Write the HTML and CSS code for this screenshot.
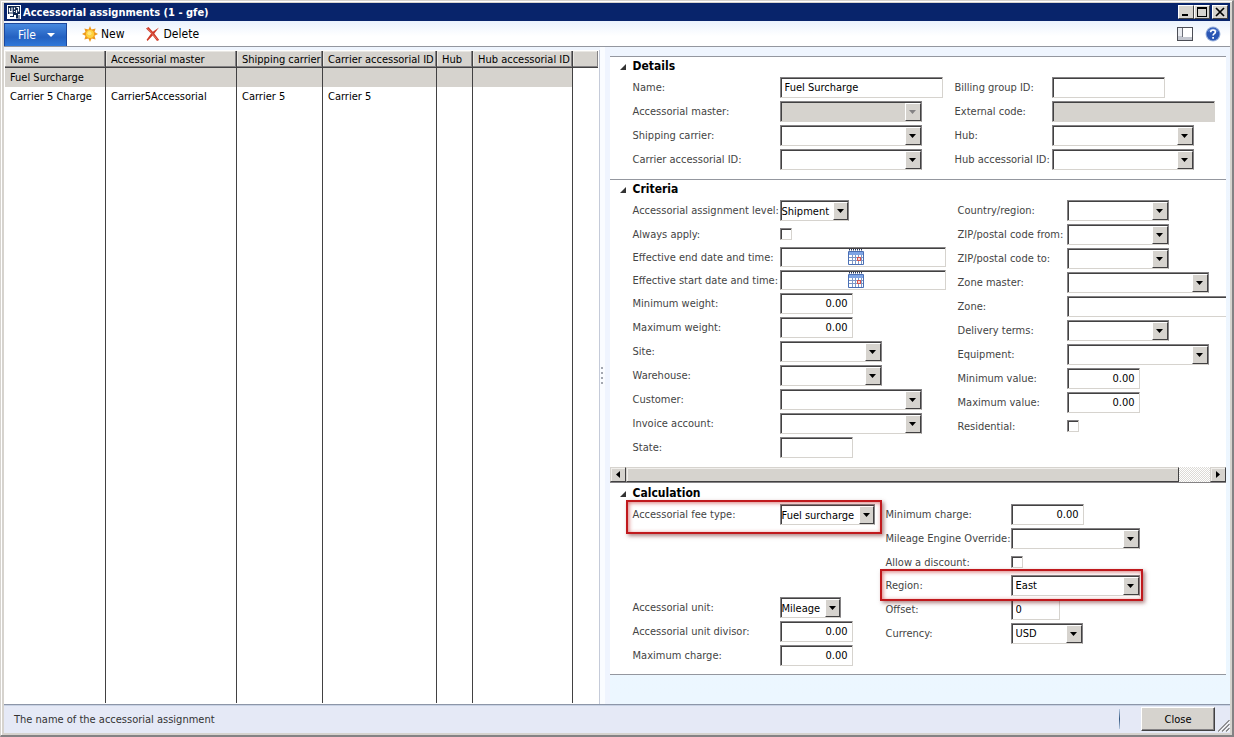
FILE: index.html
```html
<!DOCTYPE html>
<html lang="en">
<head>
<meta charset="utf-8">
<title>Accessorial assignments (1 - gfe)</title>
<link rel="stylesheet" href="styles.css">
</head>
<body>
<div class="window">
  <header class="titlebar">
    <svg class="app-icon" width="14" height="14" viewBox="0 0 14 14" aria-hidden="true">
      <rect width="14" height="14" fill="#fff"/>
      <path d="M1 1h12v8h-2v4H9v-3H7v2H3v-1h3V9H1z" fill="#10264c"/>
      <path d="M2.500 3v3.500h2.500V2.500M7.500 2.500v2M7.500 6v1M9.500 2.500h2v4M9.500 5v3M2 8h4" fill="none" stroke="#fff" stroke-width="1.200"/>
      <path d="M12 10v4M10 12v2" stroke="#10264c"/>
    </svg>
    <h1 class="title">Accessorial assignments (1 - gfe)</h1>
    <button class="win-btn" aria-label="Minimize"><svg width="12" height="10" viewBox="0 0 12 10"><path d="M2 7h6v2H2z"/></svg></button>
    <button class="win-btn" aria-label="Maximize"><svg width="12" height="10" viewBox="0 0 12 10"><path d="M1 0h10v10H1zM2 2v7h8V2z" fill-rule="evenodd"/></svg></button>
    <button class="win-btn win-close" aria-label="Close window"><svg width="12" height="10" viewBox="0 0 12 10"><path d="M2 1l8 8M10 1L2 9" stroke="#000" stroke-width="1.7"/></svg></button>
  </header>

  <nav class="toolbar">
    <button class="file-tab">File<svg width="8" height="4" viewBox="0 0 8 4"><path d="M0 0h8L4 4z" fill="#fff"/></svg></button>
    <button class="tool">
      <svg width="16" height="16" viewBox="0 0 16 16"><path d="M8 0l1.500 3.500L13.600 2.400 12.500 6 16 8l-3.500 1.800 1.100 3.800-4-1.100L8 16l-1.600-3.500-4 1.100 1.100-3.800L0 8l3.500-2-1.100-3.600 4.100 1.100z" fill="#ee9a1c"/><circle cx="8" cy="8" r="4" fill="#ffd23e"/><circle cx="7.500" cy="7.300" r="2" fill="#ffe680"/></svg>
      New
    </button>
    <button class="tool tool-delete">
      <svg width="14" height="14" viewBox="0 0 14 14"><path d="M0 1.500L2.500 0l4.300 4.800L13 .5 8.300 6.600l4.900 6.400-2.200 1-4.300-5.400L1.500 14 .6 12.800l4.500-6.200z" fill="#cf3a28"/><path d="M1.500 1.500l9.800 11" stroke="#e98070" stroke-width=".8"/></svg>
      Delete
    </button>
    <span class="spacer"></span>
    <button class="icon-btn" aria-label="Layout">
      <svg width="16" height="14" viewBox="0 0 16 14"><rect x=".5" y=".5" width="15" height="13" fill="#c3c6cf" stroke="#4b4d55"/><path d="M6 1h9v9H6z" fill="#fff"/><path d="M1 1h4v8H1z" fill="#e9ebf0"/><path d="M5.500 1v9" stroke="#6b6e78"/></svg>
    </button>
    <button class="icon-btn" aria-label="Help">
      <svg width="16" height="16" viewBox="0 0 16 16"><circle cx="8" cy="8" r="7.500" fill="#9db4dd"/><circle cx="8" cy="8" r="6.500" fill="#2a56b4"/><path d="M2.500 6a6 6 0 0 1 11 0q-5.500-2-11 0z" fill="#5d84d3"/><path d="M5.700 6.200C5.700 3.300 10.400 3.300 10.400 6c0 1.700-2.300 1.700-2.300 3.500M8.100 11v1.700" fill="none" stroke="#fff" stroke-width="1.700"/></svg>
    </button>
  </nav>

  <main class="content">
    <div class="list-pane">
      <table class="grid">
        <colgroup><col class="c-name"><col class="c-master"><col class="c-carrier"><col class="c-id"><col class="c-hub"><col class="c-hubid"><col></colgroup>
        <thead>
          <tr><th>Name</th><th>Accessorial master</th><th>Shipping carrier</th><th>Carrier accessorial ID</th><th>Hub</th><th>Hub accessorial ID</th><th></th></tr>
        </thead>
        <tbody>
          <tr class="selected"><td>Fuel Surcharge</td><td></td><td></td><td></td><td></td><td></td><td></td></tr>
          <tr><td>Carrier 5 Charge</td><td>Carrier5Accessorial</td><td>Carrier 5</td><td>Carrier 5</td><td></td><td></td><td></td></tr>
          <tr class="filler"><td></td><td></td><td></td><td></td><td></td><td></td><td></td></tr>
        </tbody>
      </table>
    </div>
    <div class="splitter"><i></i><i></i><i></i><i></i></div>

    <div class="form-pane">
      <form class="panel">
        <section class="section details">
          <h2><svg width="6" height="6" viewBox="0 0 6 6"><path d="M6 0v6H0z"/></svg>Details</h2>
          <div class="columns">
            <div class="fields">
              <div class="row"><label for="name">Name:</label><input class="w-long" id="name" type="text" value="Fuel Surcharge"></div>
              <div class="row"><label for="master">Accessorial master:</label><span class="combo w-combo disabled"><select id="master" disabled><option></option></select></span></div>
              <div class="row"><label for="carrier">Shipping carrier:</label><span class="combo w-combo"><select id="carrier"><option></option></select></span></div>
              <div class="row"><label for="cid">Carrier accessorial ID:</label><span class="combo w-combo"><select id="cid"><option></option></select></span></div>
            </div>
            <div class="fields">
              <div class="row"><label for="billing">Billing group ID:</label><input class="w-group" id="billing" type="text"></div>
              <div class="row"><label for="ext">External code:</label><input class="w-long" id="ext" type="text" disabled></div>
              <div class="row"><label for="hub">Hub:</label><span class="combo w-combo"><select id="hub"><option></option></select></span></div>
              <div class="row"><label for="hubid">Hub accessorial ID:</label><span class="combo w-combo"><select id="hubid"><option></option></select></span></div>
            </div>
          </div>
        </section>

        <section class="section criteria">
          <h2><svg width="6" height="6" viewBox="0 0 6 6"><path d="M6 0v6H0z"/></svg>Criteria</h2>
          <div class="columns">
            <div class="fields">
              <div class="row"><label for="level">Accessorial assignment level:</label><span class="combo list w-level"><select id="level"><option>Shipment</option></select></span></div>
              <div class="row short"><label for="always">Always apply:</label><input id="always" type="checkbox"></div>
              <div class="row short"><label for="end">Effective end date and time:</label><span class="date"><input id="end" type="text"><svg width="16" height="16" viewBox="0 0 16 16"><path d="M.5 2.500h15v13H.5z" fill="#fff" stroke="#4a6fb5"/><path d="M1 3h14v3H1z" fill="#7ea4e4"/><path d="M1 .8h14" stroke="#26365c" stroke-width="1.600" stroke-dasharray="1 1"/><path d="M1 8.500h14M1 11.500h14M4.500 6v9M7.500 6v9M10.500 6v9M13.500 6v9" stroke="#7d97c6"/><path d="M9 8h4v4H9z" fill="#d9544f"/><path d="M10 9h2v2h-2z" fill="#fbd9d6"/></svg></span></div>
              <div class="row short"><label for="start">Effective start date and time:</label><span class="date"><input id="start" type="text"><svg width="16" height="16" viewBox="0 0 16 16"><path d="M.5 2.500h15v13H.5z" fill="#fff" stroke="#4a6fb5"/><path d="M1 3h14v3H1z" fill="#7ea4e4"/><path d="M1 .8h14" stroke="#26365c" stroke-width="1.600" stroke-dasharray="1 1"/><path d="M1 8.500h14M1 11.500h14M4.500 6v9M7.500 6v9M10.500 6v9M13.500 6v9" stroke="#7d97c6"/><path d="M9 8h4v4H9z" fill="#d9544f"/><path d="M10 9h2v2h-2z" fill="#fbd9d6"/></svg></span></div>
              <div class="row"><label for="minw">Minimum weight:</label><input class="num" id="minw" type="text" value="0.00"></div>
              <div class="row"><label for="maxw">Maximum weight:</label><input class="num" id="maxw" type="text" value="0.00"></div>
              <div class="row"><label for="site">Site:</label><span class="combo w-code"><select id="site"><option></option></select></span></div>
              <div class="row"><label for="wh">Warehouse:</label><span class="combo w-code"><select id="wh"><option></option></select></span></div>
              <div class="row"><label for="cust">Customer:</label><span class="combo w-combo"><select id="cust"><option></option></select></span></div>
              <div class="row"><label for="inv">Invoice account:</label><span class="combo w-combo"><select id="inv"><option></option></select></span></div>
              <div class="row"><label for="state">State:</label><input class="num" id="state" type="text"></div>
            </div>
            <div class="fields">
              <div class="row"><label for="country">Country/region:</label><span class="combo w-code"><select id="country"><option></option></select></span></div>
              <div class="row"><label for="zipf">ZIP/postal code from:</label><span class="combo w-code"><select id="zipf"><option></option></select></span></div>
              <div class="row"><label for="zipt">ZIP/postal code to:</label><span class="combo w-code"><select id="zipt"><option></option></select></span></div>
              <div class="row"><label for="zm">Zone master:</label><span class="combo w-combo"><select id="zm"><option></option></select></span></div>
              <div class="row"><label for="zone">Zone:</label><input class="w-long" id="zone" type="text"></div>
              <div class="row"><label for="terms">Delivery terms:</label><span class="combo w-code"><select id="terms"><option></option></select></span></div>
              <div class="row"><label for="equip">Equipment:</label><span class="combo w-combo"><select id="equip"><option></option></select></span></div>
              <div class="row"><label for="minv">Minimum value:</label><input class="num" id="minv" type="text" value="0.00"></div>
              <div class="row"><label for="maxv">Maximum value:</label><input class="num" id="maxv" type="text" value="0.00"></div>
              <div class="row short"><label for="res">Residential:</label><input id="res" type="checkbox"></div>
            </div>
          </div>
        </section>

        <div class="scrollbar">
          <button type="button" aria-label="Scroll left"><svg width="4" height="7" viewBox="0 0 4 7"><path d="M4 0v7L0 3.500z"/></svg></button>
          <span class="thumb"></span><span class="track"></span>
          <button type="button" aria-label="Scroll right"><svg width="4" height="7" viewBox="0 0 4 7"><path d="M0 0v7l4-3.500z"/></svg></button>
        </div>

        <section class="section calculation">
          <h2><svg width="6" height="6" viewBox="0 0 6 6"><path d="M6 0v6H0z"/></svg>Calculation</h2>
          <div class="columns">
            <div class="fields">
              <div class="row marked mark-fee"><label for="fee">Accessorial fee type:</label><span class="combo list w-fee"><select id="fee"><option>Fuel surcharge</option></select></span></div>
              <div class="row push"><label for="unit">Accessorial unit:</label><span class="combo list w-unit"><select id="unit"><option>Mileage</option></select></span></div>
              <div class="row"><label for="div">Accessorial unit divisor:</label><input class="num" id="div" type="text" value="0.00"></div>
              <div class="row"><label for="maxc">Maximum charge:</label><input class="num" id="maxc" type="text" value="0.00"></div>
            </div>
            <div class="fields">
              <div class="row"><label for="minc">Minimum charge:</label><input class="num" id="minc" type="text" value="0.00"></div>
              <div class="row"><label for="mile">Mileage Engine Override:</label><span class="combo w-region"><select id="mile"><option></option></select></span></div>
              <div class="row short"><label for="disc">Allow a discount:</label><input id="disc" type="checkbox"></div>
              <div class="row marked mark-region"><label for="region">Region:</label><span class="combo w-region"><select id="region"><option>East</option></select></span></div>
              <div class="row"><label for="offset">Offset:</label><input class="w-offset" id="offset" type="text" value="0"></div>
              <div class="row"><label for="cur">Currency:</label><span class="combo w-cur"><select id="cur"><option>USD</option></select></span></div>
            </div>
          </div>
        </section>
      </form>
    </div>
  </main>

  <footer class="status">
    <span class="message">The name of the accessorial assignment</span>
    <span class="divider"></span>
    <button class="close-btn">Close</button>
    <svg class="grip" width="12" height="12" viewBox="0 0 12 12"><path d="M0 12L12 0M4 12l8-8M8 12l4-4" stroke="#fff" stroke-width="2.500"/><path d="M0 11.500L11.500 0M4 11.500L11.500 4M8 11.500L11.500 8" stroke="#77777c" stroke-width="1.200"/></svg>
  </footer>
</div>
</body>
</html>
```

FILE: styles.css
```css
*, *::after { box-sizing: border-box; }

:root {
  --face: #d6d3ce;
  --dark: #424142;
  --mid: #848284;
  --pale: #eff5fe;
}

body, button, input, select {
  font-family: "DejaVu Sans Condensed", "DejaVu Sans", sans-serif;
  font-size: 11px;
  color: #000;
}
body { margin: 0; }
button { border: 0; padding: 0; background: none; }
svg { flex: none; display: block; }

.window {
  display: flex;
  flex-direction: column;
  min-height: 100vh;
  padding: 2px 2px 2px 3px;
  background: var(--face);
  border: 1px solid var(--face);
  border-right: 2px solid var(--mid);
  border-bottom: 2px solid var(--mid);
  box-shadow: inset 1px 1px #fff;
}

/* Title bar */
.titlebar {
  display: flex;
  align-items: center;
  height: 18px;
  padding: 0 2px 0 3px;
  background: #08246b;
}
.title {
  flex: 1;
  margin: 0 0 0 2px;
  font-size: 11px;
  font-weight: bold;
  color: #fff;
}
.win-btn {
  display: grid;
  place-items: center;
  width: 16px;
  height: 14px;
  background: var(--face);
  border: 1px solid;
  border-color: #fff var(--dark) var(--dark) #fff;
}
.win-close { margin-left: 2px; }

/* Tool bar */
.toolbar {
  display: flex;
  align-items: center;
  height: 26px;
  padding-right: 9px;
  background: linear-gradient(#eaf2fd, #fff 60%);
  border-bottom: 1px solid #94979f;
}
.file-tab {
  display: flex;
  align-items: center;
  gap: 11px;
  align-self: stretch;
  margin-top: 2px;
  padding: 0 11px 0 13px;
  font-size: 12px;
  color: #fff;
  background: linear-gradient(#4689df, #2461c1 60%, #2e77da);
  border: 1px solid #1b479c;
  border-bottom: 0;
}
.tool {
  display: flex;
  align-items: center;
  gap: 3px;
  margin-left: 15px;
  font-size: 12px;
}
.tool-delete { margin-left: 21px; gap: 4px; }
.spacer { flex: 1; }
.icon-btn { margin-left: 12px; }

/* Content */
.content {
  display: flex;
  flex: 1;
  background: var(--pale);
}
.list-pane {
  flex: 596 1 0;
  margin-top: 3px;
  padding: 1px;
  background: #fff;
  border-right: 1px solid #c5cbd9;
  display: flex;
}
.grid {
  width: 100%;
  table-layout: fixed;
  border-collapse: separate;
  border-spacing: 0;
}
.c-name { width: 101px; }
.c-master { width: 131px; }
.c-carrier { width: 86px; }
.c-id { width: 114px; }
.c-hub { width: 36px; }
.c-hubid { width: 100px; }
.grid th {
  height: 17px;
  padding: 0 0 0 5px;
  font-weight: normal;
  text-align: left;
  white-space: nowrap;
  background: var(--face);
  border-right: 1px solid var(--dark);
  border-bottom: 1px solid var(--dark);
  box-shadow: inset -1px -1px var(--mid), inset 1px 1px #e9e7e3;
}
.grid td {
  height: 19px;
  padding: 0 0 0 5px;
  white-space: nowrap;
  border-right: 1px solid var(--dark);
}
.grid th:last-child, .grid td:last-child { border-right: 0; }
.grid .selected td { background: var(--face); }
.grid .selected td:last-child { background: #fff; }
.grid .filler td { height: auto; }

.splitter {
  display: flex;
  flex-direction: column;
  justify-content: center;
  gap: 3px;
  width: 10px;
  padding-left: 1px;
  background: linear-gradient(90deg, #fafcff 50%, #eff4fe 50%);
}
.splitter i { width: 2px; height: 2px; background: #a3a7b0; }

/* Form */
.form-pane {
  flex: 620 1 0;
  min-width: 0;
  padding: 9px 4px 0 0;
  background: linear-gradient(var(--pale), #ecf7ff);
}
.panel {
  overflow: hidden;
  background: #fff;
  border-bottom: 1px solid #94979f;
}
.section {
  padding: 0 0 9px 23px;
  border-top: 1px solid #94979f;
}
.calculation { padding-bottom: 8px; border-top-color: #fff; }
.section h2 {
  display: flex;
  align-items: center;
  gap: 7px;
  height: 17px;
  margin: 0 0 3px -13px;
  font-size: 12px;
  font-weight: bold;
}
.section h2 svg { margin-top: 3px; fill: #333; }
.columns { display: flex; gap: 12px; }
.fields {
  display: grid;
  flex: none;
  align-content: start;
  gap: 3px;
}
.row {
  display: flex;
  align-items: center;
  height: 21px;
}
.row.short { height: 20px; }
.row label {
  flex: none;
  width: 147px;
  white-space: nowrap;
  color: #444;
}
.details .fields + .fields label { width: 97px; }
.criteria .fields + .fields label { width: 109px; }
.calculation .fields + .fields label { width: 125px; }
.calculation .columns { gap: 13px; }
.push { margin-top: 69px; }

input[type="text"], .combo {
  height: 100%;
  background: #fff;
  border: 1px solid;
  border-color: var(--mid) var(--face) var(--face) var(--mid);
  box-shadow: inset 1px 1px var(--dark);
}
input[type="text"] {
  margin: 0;
  padding: 0 4px;
  border-radius: 0;
}
input[type="text"]:disabled, .combo.disabled { background: var(--face); }
input[type="checkbox"] {
  appearance: none;
  width: 12px;
  height: 12px;
  margin: 0;
  background: #fff;
  border: 1px solid;
  border-color: var(--mid) var(--face) var(--face) var(--mid);
  box-shadow: inset 1px 1px var(--dark);
}
input.num { width: 73px; text-align: right; }

.combo { display: flex; padding: 1px 0 0 2px; border-right-color: var(--mid); }
.combo select {
  appearance: none;
  flex: 1;
  min-width: 0;
  margin: 0;
  padding: 0 0 1px 2px;
  background: none;
  border: 0;
  border-radius: 0;
  opacity: 1;
}
.combo.list { padding-left: 1px; }
.combo.list select { padding: 0; }
.combo::after {
  content: "";
  flex: none;
  width: 16px;
  pointer-events: none;
  background: var(--face) url("data:image/svg+xml,%3Csvg xmlns='http://www.w3.org/2000/svg' width='7' height='4'%3E%3Cpath d='M0 0h7L3.500 4z'/%3E%3C/svg%3E") no-repeat center;
  border: 1px solid;
  border-color: #fff var(--dark) var(--dark) #fff;
}
.combo.list::after { width: 15px; }
.combo.disabled::after {
  background-image: url("data:image/svg+xml,%3Csvg xmlns='http://www.w3.org/2000/svg' width='7' height='4'%3E%3Cpath d='M0 0h7L3.500 4z' fill='%23848284'/%3E%3C/svg%3E");
}
.w-long { width: 163px; }
.w-combo { width: 142px; }
.w-group { width: 113px; }
.w-code { width: 102px; }
.w-level { width: 69px; }
.w-fee { width: 95px; }
.w-unit { width: 61px; }
.w-region { width: 129px; }
.w-offset { width: 49px; }
.w-cur { width: 72px; }

/* Fixes the first column so the second starts at the same place in every row */
.calculation .fields:first-child { width: 240px; }

.date { position: relative; width: 166px; height: 100%; }
.date input { width: 100%; }
.date svg { position: absolute; left: 68px; top: 2px; }

/* Red callouts drawn over the rows */
.marked { position: relative; }
.marked::after {
  content: "";
  position: absolute;
  pointer-events: none;
  border: 2px solid #c0191d;
  box-shadow: 2px 2px 4px rgba(110, 30, 30, .55), inset 1px 1px 4px rgba(190, 30, 30, .6);
}
.mark-fee::after { inset: -4px -7px -9px -7px; }
.mark-region::after { inset: -6px -3px -5px -6px; }

/* Horizontal scroll bar */
.scrollbar { display: flex; height: 16px; border-bottom: 1px solid var(--mid); }
.scrollbar button, .thumb {
  display: grid;
  place-items: center;
  width: 16px;
  background: var(--face);
  border: 1px solid;
  border-color: var(--face) var(--dark) var(--dark) var(--face);
  box-shadow: inset 1px 1px #f1efec;
}
.scrollbar .thumb { flex: 18 1 0; }
.track {
  flex: 1 1 0;
  background: repeating-conic-gradient(#dcdad6 0 25%, #fff 0 50%) 0 0 / 2px 2px;
}

/* Status bar */
.status {
  display: flex;
  align-items: center;
  height: 29px;
  padding-left: 10px;
  background: #e5e9f6;
  border-top: 1px solid #8d96a8;
  box-shadow: inset 0 1px #c8d2e4;
}
.message { flex: 1; color: #333; }
.divider { width: 1px; height: 20px; background: linear-gradient(#b9cbe3, #30557f, #b9cbe3); }
.close-btn {
  width: 74px;
  height: 24px;
  margin-left: 21px;
  background: var(--face);
  border: 1px solid;
  border-color: #fff var(--dark) var(--dark) #fff;
  box-shadow: inset -1px -1px var(--mid);
}
.grip { align-self: flex-end; margin: 0 0 1px 3px; }
```
